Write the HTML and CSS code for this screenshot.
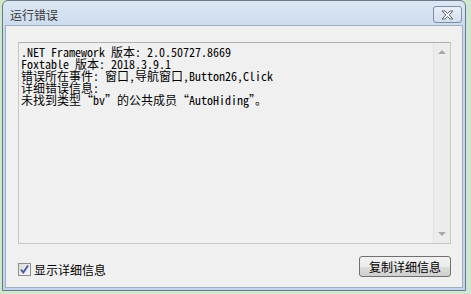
FILE: index.html
```html
<!DOCTYPE html>
<html>
<head>
<meta charset="utf-8">
<link rel="stylesheet" href="styles.css">
</head>
<body>
<div class="window">
  <div class="titlebar">
    <span class="title">运行错误</span>
    <div class="close"><svg width="15" height="10" viewBox="0 0 15 10"><path d="M2 1 L5 1 L7.5 3.5 L10 1 L13 1 L9.2 5 L13 9 L10 9 L7.5 6.5 L5 9 L2 9 L5.8 5 Z" fill="#fff" stroke="#5b6572" stroke-width="1" stroke-linejoin="round"/></svg></div>
  </div>
  <div class="client">
    <div class="textbox">
      <div class="text">.NET Framework 版本: 2.0.50727.8669
Foxtable 版本: 2018.3.9.1
错误所在事件: 窗口,导航窗口,Button26,Click
详细错误信息:
未找到类型“bv”的公共成员“AutoHiding”。</div>
      <div class="scrollbar">
        <div class="arrow up"></div>
        <div class="arrow down"></div>
      </div>
    </div>
    <div class="bottom">
      <label class="check">
        <span class="box"><svg width="11" height="11" viewBox="0 0 11 11"><path d="M2 5.5 L4.3 8.5 L9 1.5" fill="none" stroke="#3d56a0" stroke-width="1.8"/></svg></span>
        <span>显示详细信息</span>
      </label>
      <div class="button">复制详细信息</div>
    </div>
  </div>
</div>
</body>
</html>
```
FILE: styles.css
```css
html, body {
  margin: 0;
  padding: 0;
}
body {
  width: 471px;
  height: 294px;
  background: #cfe7cf;
  font-family: "Noto Sans CJK SC", "Liberation Sans", sans-serif;
  font-size: 12px;
  overflow: hidden;
}
.window {
  margin-left: 2px;
  width: 458px;
  height: 287px;
  border: 1px solid #6b7888;
  border-radius: 6px 6px 0 0;
  background: linear-gradient(#dce7f4, #c9d9ec 30px, #c4d5ea);
  padding: 0 2px 2px 2px;
  display: flex;
  flex-direction: column;
}
.titlebar {
  height: 24px;
  display: flex;
  align-items: flex-start;
  justify-content: space-between;
  padding-left: 5px;
  padding-right: 1px;
}
.title {
  color: #3a3a3a;
  font-size: 12px;
  line-height: 14px;
  margin-top: 7px;
}
.close {
  margin-top: 5px;
  width: 27px;
  height: 15px;
  border: 1px solid #7d8ea6;
  border-radius: 3px;
  background: linear-gradient(#e9eff7, #d4deeb);
  display: flex;
  align-items: center;
  justify-content: center;
}
.client {
  flex: 1;
  background: #f0f0f0;
  border: 1px solid #9eafc4;
  padding: 16px 11px 0 12px;
  display: flex;
  flex-direction: column;
}
.textbox {
  height: 200px;
  border: 1px solid #c8c8c8;
  border-top-color: #b0b0b0;
  background: #f0f0f0;
  display: flex;
}
.text {
  flex: 1;
  white-space: pre;
  font-family: "Noto Sans Mono CJK SC", "Liberation Mono", monospace;
  font-size: 12px;
  line-height: 12px;
  color: #000;
  padding: 3px 0 0 2px;
}
.scrollbar {
  width: 16px;
  border-left: 1px solid #e2e2e2;
  background: #ececec;
  display: flex;
  flex-direction: column;
  justify-content: space-between;
  align-items: center;
  padding: 7px 0 7px;
}
.arrow {
  width: 0;
  height: 0;
  border-left: 4px solid transparent;
  border-right: 4px solid transparent;
}
.arrow.up {
  border-bottom: 4px solid #a8a8a8;
}
.arrow.down {
  border-top: 4px solid #a8a8a8;
}
.bottom {
  display: flex;
  justify-content: space-between;
  align-items: flex-start;
  margin-top: 11px;
}
.check {
  display: flex;
  align-items: center;
  height: 13px;
  gap: 3px;
  color: #000;
  margin-top: 8px;
}
.box {
  width: 11px;
  height: 11px;
  border: 1px solid #8e8f8f;
  background: linear-gradient(135deg, #dcdcdc, #f6f6f6);
  display: flex;
}
.button {
  margin-top: 1px;
  width: 90px;
  height: 19px;
  border: 1px solid #707070;
  border-radius: 3px;
  background: linear-gradient(#f2f2f2 0, #ebebeb 50%, #dddddd 51%, #cfcfcf 100%);
  color: #000;
  text-align: center;
  line-height: 19px;
}
```
